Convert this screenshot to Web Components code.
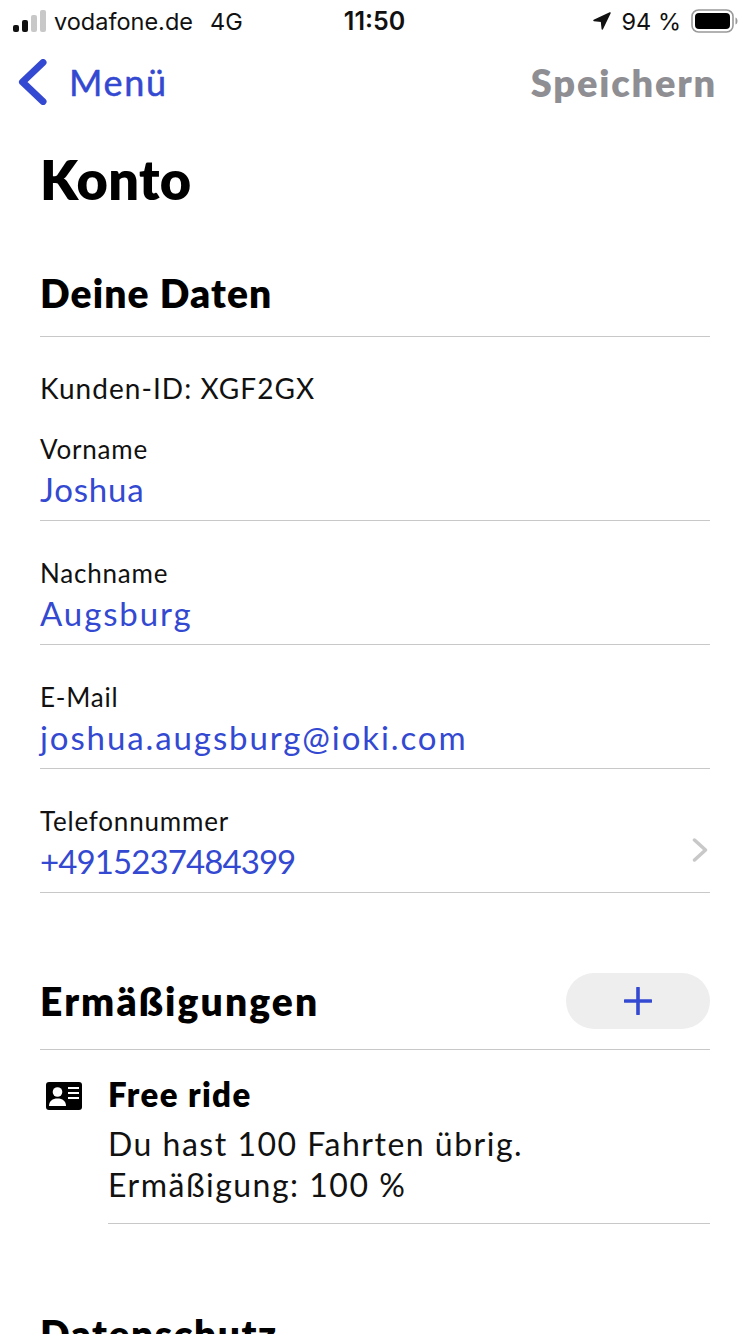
<!DOCTYPE html>
<html lang="de">
<head>
<meta charset="utf-8">
<title>Konto</title>
<style>
  html, body { margin: 0; height: 1334px; overflow: hidden; background: #fff; }
  body { font-family: Lato, "Noto Sans", sans-serif; color: #000; }
</style>
</head>
<body>
<template id="status-bar-tpl">
  <style>
    :host { display: grid; grid-template-columns: 1fr auto 1fr; align-items: center; height: 42px; padding: 0 12px 2px 13px; font: 400 23.500px Inter, sans-serif; color: #111; }
    .left, .right { display: flex; align-items: center; }
    .left { gap: 8px; }
    .left b { font-weight: 400; margin-left: 9px; }
    .time { font-weight: 600; font-size: 25px; margin-right: 2px; }
    .right { justify-content: flex-end; }
    svg { display: block; }
  </style>
  <div class="left">
    <svg width="33" height="22" viewBox="0 0 33 22">
      <rect x="0" y="15" width="6" height="7" rx="2" fill="#111"/>
      <rect x="9" y="10" width="6" height="12" rx="2" fill="#111"/>
      <rect x="18" y="5" width="6" height="17" rx="2" fill="#c8c8c8"/>
      <rect x="27" y="0" width="6" height="22" rx="2" fill="#c8c8c8"/>
    </svg>
    <span>vodafone.de</span><b>4G</b>
  </div>
  <div class="time">11:50</div>
  <div class="right">
    <svg width="20" height="20" viewBox="0 0 20 20" style="margin-right:10px"><path d="M18 2 2 9.500l7.500.8.8 7.700z" fill="#111" stroke="#111" stroke-width="1.500" stroke-linejoin="round"/></svg>
    <span>94 %</span>
    <svg width="47" height="24" viewBox="0 0 47 24" style="margin-left:10px">
      <rect x="1" y="1" width="41" height="22" rx="6.500" fill="none" stroke="#999" stroke-width="1.600"/>
      <rect x="4" y="4" width="35" height="16" rx="4" fill="#000"/>
      <path d="M44.500 8.500c1.500.5 2 2 2 3.500s-.5 3-2 3.500z" fill="#999"/>
    </svg>
  </div>
</template>

<template id="nav-bar-tpl">
  <style>
    :host { display: flex; justify-content: space-between; align-items: center; height: 76px; padding: 0 33px 0 18px; font: 700 38px Lato, sans-serif; }
    .back { display: flex; align-items: center; gap: 21px; color: #3449d1; font-size: 36px; letter-spacing: 1.700px; -webkit-text-stroke: .5px #3449d1; font-weight: 400; }
    .save { color: #8e8e93; font-weight: 800; letter-spacing: 1.800px; }
    svg { display: block; }
  </style>
  <div class="back">
    <svg width="30" height="46" viewBox="0 0 30 46"><path d="M25 3.500 4.500 23 25 42.500" fill="none" stroke="#3449d1" stroke-width="7" stroke-linecap="round" stroke-linejoin="round"/></svg>
    <slot name="back"></slot>
  </div>
  <div class="save"><slot name="action"></slot></div>
</template>

<template id="section-head-tpl">
  <style>
    :host { display: flex; justify-content: space-between; align-items: center; margin: 0 40px; min-height: 56px; padding-bottom: 15px; border-bottom: 1px solid #c8c8c8; font: 800 39px Lato, sans-serif; letter-spacing: 1.100px; }
  </style>
  <slot></slot>
  <slot name="action"></slot>
</template>

<template id="data-field-tpl">
  <style>
    :host { display: flex; justify-content: space-between; align-items: center; margin: 0 40px; height: 97px; padding-top: 26px; border-bottom: 1px solid #c8c8c8; }
    .label { font: 400 26px/30px Lato, sans-serif; letter-spacing: .8px; color: #111; }
    .value { font: 400 33px/42px Lato, sans-serif; letter-spacing: var(--value-spacing, 1.900px); color: #3449d1; margin-top: 4px; }
    svg { display: none; margin: 12px 2px 0 0; }
    :host([chevron]) svg { display: block; }
  </style>
  <div>
    <div class="label"><slot name="label"></slot></div>
    <div class="value"><slot></slot></div>
  </div>
  <svg width="16" height="24" viewBox="0 0 16 24"><path d="M2.500 2 13.500 12 2.500 22" fill="none" stroke="#c8c8c8" stroke-width="3.500" stroke-linecap="round" stroke-linejoin="round"/></svg>
</template>

<template id="add-button-tpl">
  <style>
    :host { display: flex; justify-content: center; align-items: center; width: 144px; height: 56px; border-radius: 28px; background: #eee; }
    svg { display: block; }
  </style>
  <svg width="28" height="28" viewBox="0 0 28 28"><path d="M14 1v26M1 14h26" stroke="#3449d1" stroke-width="3.600" stroke-linecap="round"/></svg>
</template>

<template id="concession-item-tpl">
  <style>
    :host { display: flex; margin: 0 40px; }
    .icon { flex: 0 0 68px; padding: 32px 0 0 6px; box-sizing: border-box; }
    .body { flex: 1; padding: 24px 0 18px; border-bottom: 1px solid #c8c8c8; }
    .title { font: 800 33px/40px Lato, sans-serif; letter-spacing: 1.400px; }
    .text { font: 400 32px/41px Lato, sans-serif; letter-spacing: 1.500px; color: #111; margin-top: 9px; }
    svg { display: block; }
  </style>
  <div class="icon">
    <svg width="36" height="28" viewBox="0 0 36 28">
      <rect width="36" height="28" rx="3" fill="#000"/>
      <circle cx="11.500" cy="10" r="4.800" fill="#fff"/>
      <path d="M3 24c0-5 3.500-7.500 8.500-7.500S20 19 20 24z" fill="#fff"/>
      <path d="M22 6h11M22 11h11M22 16h11" stroke="#fff" stroke-width="2"/>
    </svg>
  </div>
  <div class="body">
    <div class="title"><slot name="title"></slot></div>
    <div class="text"><slot></slot></div>
  </div>
</template>

<status-bar></status-bar>
<nav-bar>
  <span slot="back">Menü</span>
  <span slot="action">Speichern</span>
</nav-bar>
<page-title>Konto</page-title>

<section-head>Deine Daten</section-head>
<customer-id>Kunden-ID: XGF2GX</customer-id>
<data-field style="padding-top:22px; --value-spacing:.8px"><span slot="label">Vorname</span>Joshua</data-field>
<data-field><span slot="label">Nachname</span>Augsburg</data-field>
<data-field><span slot="label">E-Mail</span>joshua.augsburg@ioki.com</data-field>
<data-field chevron style="--value-spacing:-.9px"><span slot="label">Telefonnummer</span>+4915237484399</data-field>

<section-head style="margin-top:80px; padding-bottom:20px; letter-spacing:2.100px">Ermäßigungen<add-button slot="action"></add-button></section-head>
<concession-item>
  <span slot="title">Free ride</span>
  Du hast 100 Fahrten übrig.<br>Ermäßigung: 100 %
</concession-item>

<section-head style="margin-top:82px; letter-spacing:1.500px">Datenschutz</section-head>

<script>
  function fromTemplate(tag, id) {
    customElements.define(tag, class extends HTMLElement {
      constructor() {
        super();
        this.attachShadow({ mode: "open" });
        this.shadowRoot.appendChild(document.getElementById(id).content.cloneNode(true));
      }
    });
  }

  fromTemplate("status-bar", "status-bar-tpl");
  fromTemplate("nav-bar", "nav-bar-tpl");
  fromTemplate("section-head", "section-head-tpl");
  fromTemplate("data-field", "data-field-tpl");
  fromTemplate("add-button", "add-button-tpl");
  fromTemplate("concession-item", "concession-item-tpl");

  class PageTitle extends HTMLElement {
    constructor() {
      super();
      this.attachShadow({ mode: "open" });
      this.shadowRoot.innerHTML = `
        <style>
          :host { display: block; margin: 0 40px; padding: 30px 0 55px; font: 800 54px/60px Lato, sans-serif; letter-spacing: .3px; }
        </style>
        <slot></slot>`;
    }
  }
  customElements.define("page-title", PageTitle);

  class CustomerId extends HTMLElement {
    constructor() {
      super();
      this.attachShadow({ mode: "open" });
      this.shadowRoot.innerHTML = `
        <style>
          :host { display: block; margin: 0 40px; padding-top: 38px; font: 400 28px/26px Lato, sans-serif; letter-spacing: 1.050px; color: #111; }
        </style>
        <slot></slot>`;
    }
  }
  customElements.define("customer-id", CustomerId);
</script>
</body>
</html>
